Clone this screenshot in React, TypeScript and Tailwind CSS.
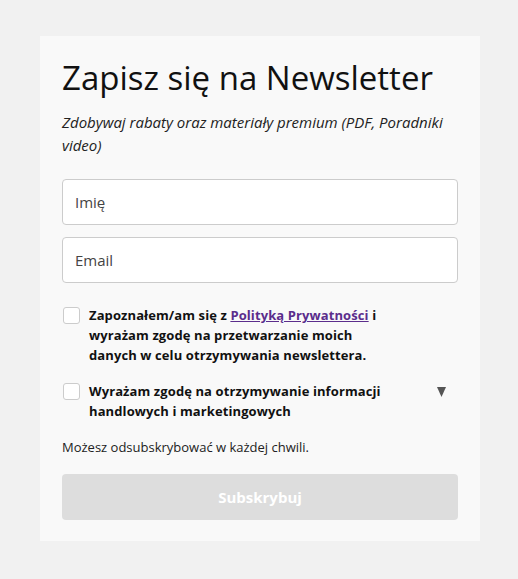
import React from "react";

export default function App() {
  return (
    <div
      className="min-h-[579px] w-full bg-[#f1f1f1] pt-[36px]"
      style={{ fontFamily: '"Open Sans", "Noto Sans", sans-serif' }}
    >
      <div className="mx-[40px] w-[440px] h-[505px] bg-[#f9f9f9] px-[22px] pt-[16px]">
        <h1 className="text-[33px] leading-[52px] text-[#111] font-normal">
          Zapisz się na Newsletter
        </h1>
        <p className="mt-[7px] text-[15px] leading-[23px] italic text-[#222]">
          Zdobywaj rabaty oraz materiały premium (PDF, Poradniki video)
        </p>
        <div className="mt-[22px] flex flex-col gap-[12px]">
          <div className="h-[46px] rounded-[4px] border border-[#cccccc] bg-white px-[12px] flex items-center text-[15px] text-[#444]">
            Imię
          </div>
          <div className="h-[46px] rounded-[4px] border border-[#cccccc] bg-white px-[12px] flex items-center text-[15px] text-[#444]">
            Email
          </div>
        </div>
        <div className="mt-[22px] flex items-start">
          <div className="mt-[2px] ml-[1px] w-[17px] h-[17px] shrink-0 rounded-[3px] border border-[#cccccc] bg-white" />
          <p className="ml-[9px] max-w-[300px] text-[13px] leading-[20px] font-bold text-[#111] tracking-[0.1px]">
            Zapoznałem/am się z{" "}
            <span className="text-[#5b2d8c] underline">Polityką Prywatności</span> i
            wyrażam zgodę na przetwarzanie moich danych w celu otrzymywania
            newslettera.
          </p>
        </div>
        <div className="mt-[16px] flex items-start">
          <div className="mt-[2px] ml-[1px] w-[17px] h-[17px] shrink-0 rounded-[3px] border border-[#cccccc] bg-white" />
          <p className="ml-[9px] max-w-[300px] text-[13px] leading-[20px] font-bold text-[#111] tracking-[0.1px]">
            Wyrażam zgodę na otrzymywanie informacji handlowych i marketingowych
          </p>
          <svg className="ml-auto mr-[12px] mt-[6px]" width="9" height="10" viewBox="0 0 9 10">
            <polygon points="0,0 9,0 4.5,10" fill="#555" />
          </svg>
        </div>
        <p className="mt-[16px] text-[13px] leading-[20px] text-[#222]">
          Możesz odsubskrybować w każdej chwili.
        </p>
        <button className="mt-[17px] w-full h-[46px] rounded-[4px] bg-[#dddddd] text-white text-[15px] font-bold">
          Subskrybuj
        </button>
      </div>
    </div>
  );
}
